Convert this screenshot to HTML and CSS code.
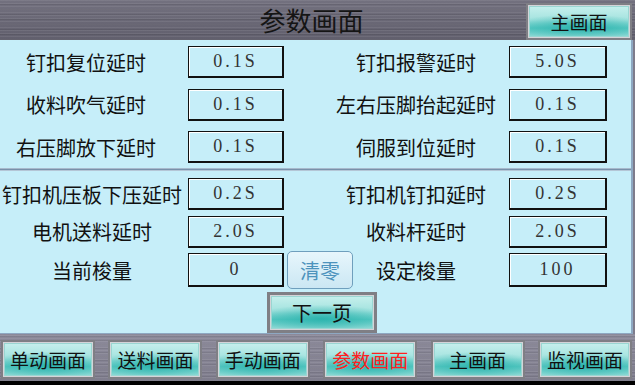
FILE: index.html
```html
<!DOCTYPE html>
<html lang="zh-CN">
<head>
    <meta charset="UTF-8">
    <meta name="viewport" content="width=device-width, initial-scale=1.0">
    <title>参数画面</title>
    <link rel="stylesheet" href="styles.css">
</head>
<body>
    <div id="pantalla">
        <div class="cabecera">
            <div class="titulo">参数画面</div>
            <button class="boton-teal boton-arriba">主画面</button>
        </div>

        <div class="panel">
            <div class="seccion seccion-uno">
                <div class="etiqueta">钉扣复位延时</div>
                <div class="valor">0.1S</div>
                <div class="etiqueta-der">钉扣报警延时</div>
                <div class="valor valor-der">5.0S</div>

                <div class="etiqueta">收料吹气延时</div>
                <div class="valor">0.1S</div>
                <div class="etiqueta-der">左右压脚抬起延时</div>
                <div class="valor valor-der">0.1S</div>

                <div class="etiqueta">右压脚放下延时</div>
                <div class="valor">0.1S</div>
                <div class="etiqueta-der">伺服到位延时</div>
                <div class="valor valor-der">0.1S</div>
            </div>

            <div class="separador"></div>

            <div class="seccion seccion-dos">
                <div class="etiqueta">钉扣机压板下压延时</div>
                <div class="valor">0.2S</div>
                <div class="etiqueta-der">钉扣机钉扣延时</div>
                <div class="valor valor-der">0.2S</div>

                <div class="etiqueta">电机送料延时</div>
                <div class="valor">2.0S</div>
                <div class="etiqueta-der">收料杆延时</div>
                <div class="valor valor-der">2.0S</div>

                <div class="etiqueta">当前梭量</div>
                <div class="valor">0</div>
                <div class="celda-limpiar">
                    <button class="boton-limpiar">清零</button>
                    <span class="etiqueta-fija">设定梭量</span>
                </div>
                <div class="valor valor-der">100</div>
            </div>

            <div class="fila-siguiente">
                <button class="boton-teal boton-siguiente">下一页</button>
            </div>
        </div>

        <div class="pie">
            <button class="boton-teal boton-pie">单动画面</button>
            <button class="boton-teal boton-pie">送料画面</button>
            <button class="boton-teal boton-pie">手动画面</button>
            <button class="boton-teal boton-pie activo">参数画面</button>
            <button class="boton-teal boton-pie">主画面</button>
            <button class="boton-teal boton-pie">监视画面</button>
        </div>
    </div>
</body>
</html>
```

FILE: styles.css
```css
body {
    margin: 0;
    font-family: "Noto Sans CJK SC", "Noto Sans", sans-serif;
    color: #111;
    background-color: #000;
}
#pantalla {
    width: 635px;
    height: 385px;
    overflow: hidden;
    background-color: #7e7c8c;
}
.cabecera {
    height: 40px;
    display: grid;
    grid-template-columns: 1fr auto 1fr;
    align-items: center;
    background:
        repeating-linear-gradient(0deg, rgba(255, 255, 255, 0.07) 0 1px, transparent 1px 3px),
        repeating-linear-gradient(0deg, rgba(0, 0, 0, 0.09) 0 1px, transparent 1px 5px),
        linear-gradient(#73717f, #615f6d);
}
.titulo {
    grid-column: 2;
    font-size: 26px;
    line-height: 40px;
    color: #151515;
    margin-right: 12px;
}
.boton-teal {
    font-family: "Noto Sans CJK SC", "Noto Sans", sans-serif;
    color: #111;
    border: 2px solid #7f7f85;
    box-shadow: inset 0 0 0 1px #d4d4d8, inset 0 0 0 2px #9ad6d2;
    background:
        radial-gradient(ellipse 70% 40% at 50% 68%, rgba(40, 178, 172, 0.9), rgba(40, 178, 172, 0) 100%),
        linear-gradient(#c9f1ee 0%, #a4e3df 45%, #5ccac4 70%, #9edfdb 100%);
    padding: 0;
    cursor: pointer;
}
.boton-arriba {
    grid-column: 3;
    justify-self: end;
    align-self: start;
    width: 106px;
    height: 37px;
    margin-top: 3px;
    margin-right: 3px;
    font-size: 19px;
}
.panel {
    width: 631px;
    background-color: #c6eef9;
    border-right: 2px solid #8ea8c2;
    border-bottom: 1px solid #8ea8c2;
}
.seccion {
    display: grid;
    grid-template-columns: 188px 96px 225px 98px;
    align-items: center;
}
.seccion-uno {
    padding: 6px 0 5px 0;
    grid-template-rows: 32px 32px 32px;
    row-gap: 10.5px;
}
.seccion-dos {
    padding-top: 7px;
    grid-template-rows: 32px 32px 34px;
    row-gap: 5.5px;
}
.separador {
    height: 3px;
    background: linear-gradient(#a7b9cc 0 1px, #7891ab 1px 2px, #b4c6d6 2px);
}
.etiqueta {
    font-size: 20px;
    text-align: center;
    padding-right: 16px;
    white-space: nowrap;
}
.seccion-dos .etiqueta {
    padding-right: 4px;
}
.etiqueta-der {
    font-size: 20px;
    text-align: center;
    padding: 0 3px 0 42px;
    white-space: nowrap;
}
.valor {
    height: 32px;
    box-sizing: border-box;
    border: 1px solid #111;
    border-right-width: 2px;
    border-bottom-width: 2px;
    box-shadow: inset 1px 1px 0 #fff;
    font-family: "Liberation Serif", serif;
    font-size: 18px;
    letter-spacing: 3px;
    color: #333;
    display: flex;
    align-items: center;
    justify-content: center;
}
.valor-der {
    width: 98px;
}
.seccion-dos .valor:nth-last-child(-n+3) {
    height: 34px;
}
.celda-limpiar {
    display: flex;
    align-items: center;
    padding-left: 3px;
}
.boton-limpiar {
    width: 66px;
    height: 38px;
    border: 1px solid #6f9fbd;
    border-radius: 5px;
    background: linear-gradient(#e7f6fc, #cbe7f3);
    color: #4d93bd;
    font-family: "Noto Sans CJK SC", "Noto Sans", sans-serif;
    font-size: 20px;
    padding: 0;
}
.etiqueta-fija {
    width: 126px;
    text-align: center;
    font-size: 20px;
}
.fila-siguiente {
    padding: 5px 0 0 267px;
    height: 41px;
}
.boton-siguiente {
    width: 110px;
    height: 41px;
    font-size: 20px;
    border-width: 3px;
}
.pie {
    height: 51px;
    box-sizing: border-box;
    padding: 6px 3px 0 1px;
    display: flex;
    justify-content: space-between;
    align-items: flex-start;
    border-bottom: 4px solid #000;
    background:
        repeating-linear-gradient(0deg, rgba(255, 255, 255, 0.08) 0 1px, transparent 1px 3px),
        repeating-linear-gradient(0deg, rgba(0, 0, 0, 0.08) 0 1px, transparent 1px 4px),
        linear-gradient(#8c8a9a, #7f7d8d);
}
.boton-pie {
    width: 94px;
    height: 39px;
    font-size: 19px;
}
.activo {
    color: #ff2020;
}
```
